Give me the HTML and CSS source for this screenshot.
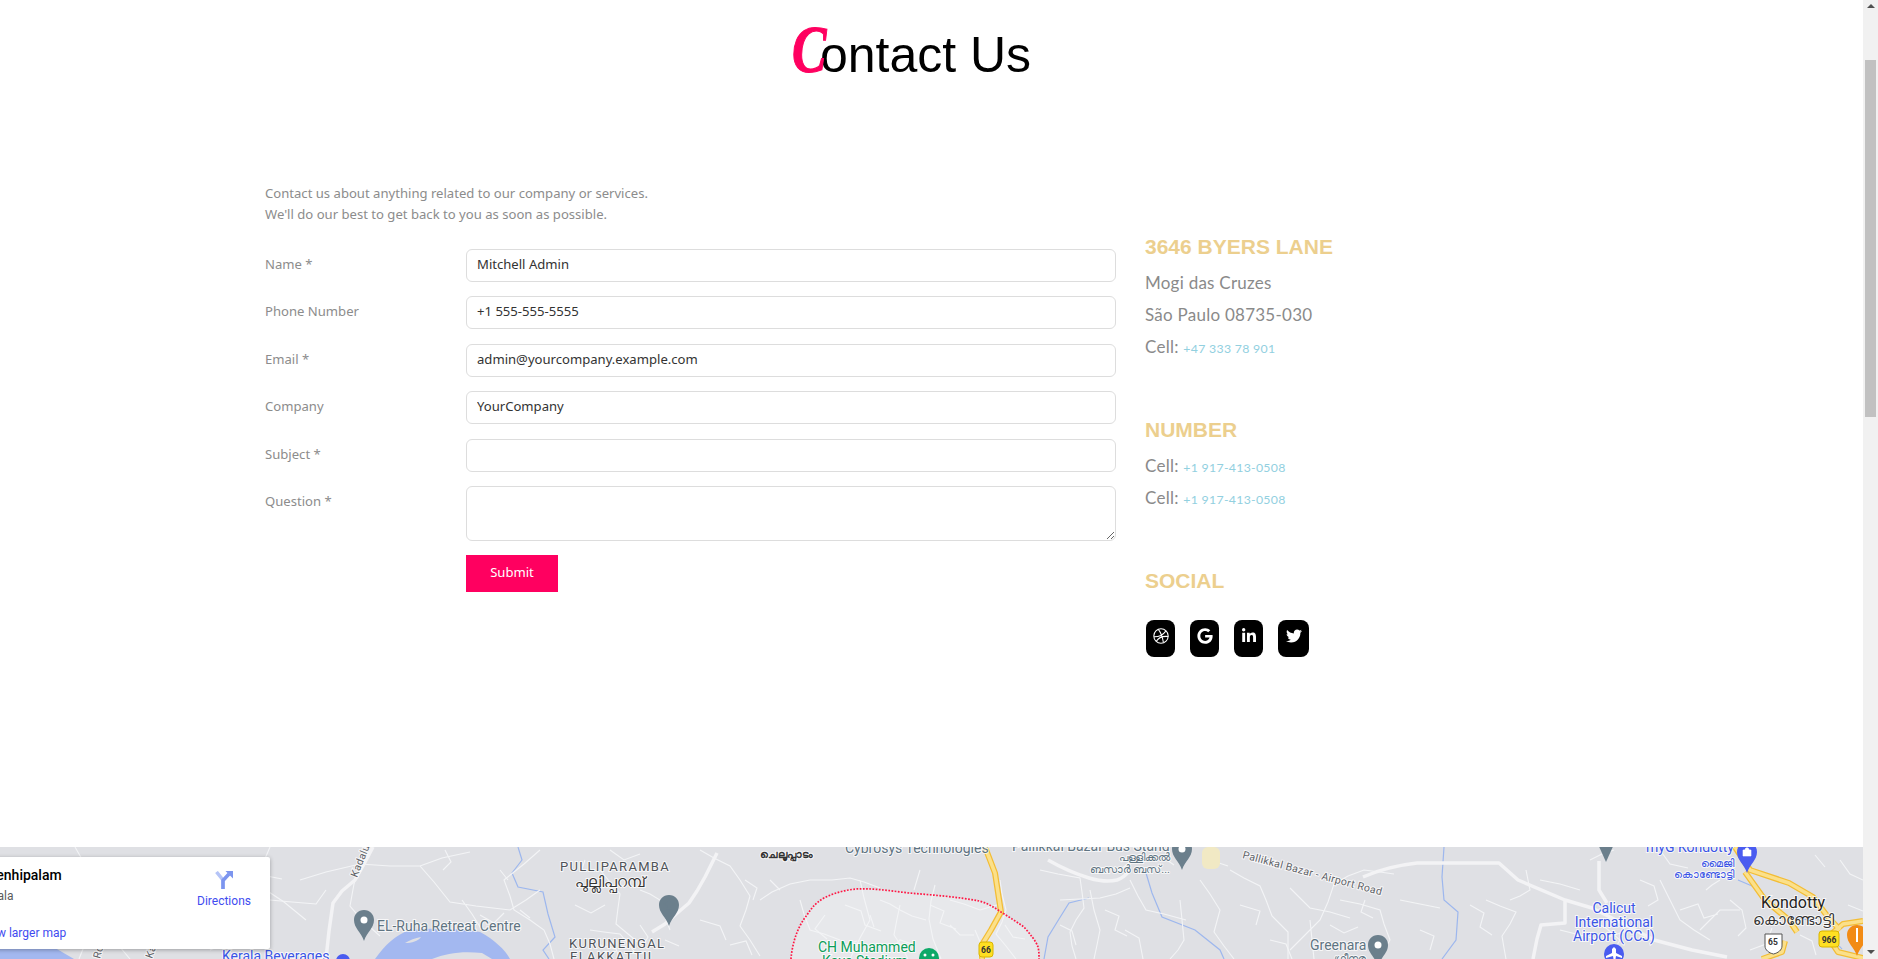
FILE: index.html
```html
<!DOCTYPE html>
<html lang="en">
<head>
<meta charset="utf-8">
<title>Contact Us</title>
<link rel="stylesheet" href="styles.css">
</head>
<body>
<div class="viewport">
  <div class="page">
    <h1 class="title"><span class="title-c">C</span>ontact Us</h1>
    <main class="contact">
      <section class="form-col">
        <p class="intro">Contact us about anything related to our company or services.<br>We'll do our best to get back to you as soon as possible.</p>
        <form class="form">
          <div class="row"><label class="lbl">Name *</label><input class="field" value="Mitchell Admin"></div>
          <div class="row"><label class="lbl">Phone Number</label><input class="field" value="+1 555-555-5555"></div>
          <div class="row"><label class="lbl">Email *</label><input class="field" value="admin@yourcompany.example.com"></div>
          <div class="row"><label class="lbl">Company</label><input class="field" value="YourCompany"></div>
          <div class="row"><label class="lbl">Subject *</label><input class="field"></div>
          <div class="row"><label class="lbl">Question *</label><textarea class="field area"></textarea></div>
          <div class="row"><span class="lbl"></span><button class="submit" type="button">Submit</button></div>
        </form>
      </section>
      <aside class="info">
        <h3 class="info-h">3646 BYERS LANE</h3>
        <p class="info-l">Mogi das Cruzes</p>
        <p class="info-l">São Paulo 08735-030</p>
        <p class="info-l">Cell: <a class="tel">+47 333 78 901</a></p>
        <h3 class="info-h gap">NUMBER</h3>
        <p class="info-l">Cell: <a class="tel">+1 917-413-0508</a></p>
        <p class="info-l">Cell: <a class="tel">+1 917-413-0508</a></p>
        <h3 class="info-h gap2">SOCIAL</h3>
        <div class="social">
          <a class="soc"><svg class="ico" viewBox="0 0 24 24" fill="none" stroke="#fff" stroke-width="1.6"><circle cx="12" cy="12" r="10.8"/><path d="M8 2c3.500 4.400 6 10.400 7.600 19.500M1.500 13.200c6.500.2 12.600-1.600 17.700-8.600M5 20c2.800-5 8-8.300 18-7.300"/></svg></a>
          <a class="soc"><svg class="ico" viewBox="0 0 488 512" fill="#fff"><path d="M488 261.800C488 403.300 391.100 504 248 504 110.800 504 0 393.200 0 256S110.800 8 248 8c66.800 0 123 24.500 166.300 64.900l-67.500 64.900C258.500 52.600 94.300 116.600 94.300 256c0 86.500 69.100 156.800 153.700 156.800 98.200 0 135-70.400 140.800-106.900H248v-85.300h236.100c2.300 12.700 3.900 24.900 3.900 41.200z"/></svg></a>
          <a class="soc"><svg class="ico" viewBox="0 0 448 512" fill="#fff"><path d="M100.280 448H7.400V148.900h92.880zM53.790 108.100C24.090 108.100 0 83.500 0 53.800a53.790 53.790 0 0 1 107.580 0c0 29.700-24.100 54.300-53.790 54.300zM447.900 448h-92.680V302.400c0-34.700-.7-79.200-48.290-79.200-48.290 0-55.690 37.700-55.690 76.700V448h-92.780V148.900h89.080v40.800h1.300c12.400-23.500 42.690-48.300 87.880-48.300 94 0 111.280 61.900 111.280 142.300V448z"/></svg></a>
          <a class="soc wide"><svg class="ico" viewBox="0 0 512 512" fill="#fff"><path d="M459.370 151.716c.325 4.548.325 9.097.325 13.645 0 138.720-105.583 298.558-298.558 298.558-59.452 0-114.680-17.219-161.137-47.106 8.447.974 16.568 1.299 25.340 1.299 49.055 0 94.213-16.568 130.274-44.832-46.132-.975-84.792-31.188-98.112-72.772 6.498.974 12.995 1.624 19.818 1.624 9.421 0 18.843-1.300 27.614-3.573-48.081-9.747-84.143-51.980-84.143-102.985v-1.299c13.969 7.797 30.214 12.670 47.431 13.319-28.264-18.843-46.781-51.005-46.781-87.391 0-19.492 5.197-37.360 14.294-52.954 51.655 63.675 129.300 105.258 216.365 109.807-1.624-7.797-2.599-15.918-2.599-24.040 0-57.828 46.782-104.934 104.934-104.934 30.213 0 57.502 12.670 76.670 33.137 23.715-4.548 46.456-13.320 66.599-25.340-7.798 24.366-24.366 44.833-46.132 57.827 21.117-2.273 41.584-8.122 60.426-16.243-14.292 20.791-32.161 39.308-52.628 54.253z"/></svg></a>
        </div>
      </aside>
    </main>
    <section class="map">
      <svg class="map-svg" viewBox="0 847 1863 112" preserveAspectRatio="none">
        <g class="water">
          <path d="M0 945h50l24 14H0z"/>
          <path d="M375 959c10-14 20-24 35-29 20-2 50-2 70 2 15 8 25 18 30 27z"/>
        </g>
        <path class="bank" d="M432 959c15-6 30-8 50-6l10 6z"/>
        <path class="bank" d="M405 943c5-3 10-5 16-6-3 4-9 6-16 6z"/>
        <g class="river">
          <path d="M518 847l4 13-10 13 6 14 25 5 5 22 7 23-12 13 6 9"/>
          <path d="M1089 898l-20 5-10 16-11 18-4 22"/>
          <path d="M1146 873l6 20 10 24 33 13 25 20 4 9"/>
          <path d="M1444 847l-2 30 2 23 14 12-2 28-14 19"/>
          <path d="M1738 880l14 6 8 4M1790 915c10 6 20 2 28 10M1820 935c8 6 16 6 22 14"/>
        </g>
        <path class="zone" d="M791 959c1-14 6-32 16-44 5-8 10-13 17-17 10-5 21-8 32-9 18-1 35 2 53 4 24 2 50 4 70 8 8 2 15 6 22 11 8 5 16 10 23 15 6 7 12 14 14 20 1 4 1 8 1 12z"/>
        <g class="road-thin">
          <path d="M75 847l8 14 4 12 6 14-2 16 2 18-6 18-8 20M20 870l14-2 16 4 20-4M30 910l16-3 18 2 28 15M110 860l18 8 22 3 20 5 24-6 36-4M130 900l22-4 18 2 20-6 14 8 16 4M236 870l12 6 18 14 18 12 22 18"/>
          <path d="M270 847l-6 14-2 14 20 4M270 900l22 2 24 2 10-14M300 880l26-8 34-8 30 2 30 0 22-8 28-6M360 866l-6 18-4 22 12 14 18 16M420 866l14 16 16 20 26 4 34 4 16-10 14-10M462 900l10 14 10 16M540 850l-16 14-20 16 6 16 4 14 16 10 14 10 6 14 4 15"/>
          <path d="M600 870l10 12 10 12-2 14-2 16 12 10 12 10M640 890l10 4 10 6 4 14 6 16M590 930l14 2 16 2 10 12 10 13M575 905l16 8 14-8M610 850l14 10 16-6M585 860l-4 12"/>
          <path d="M700 850l14 8 16 8 10 14 10 16-4 14-6 16 10 14 10 16M760 900l12-8 18-8 20-4 22 0 18-2 14 4 16 6M800 900l4 14 6 16 14 4 16 6M860 880l4 18 6 22-10 18-10 21M880 900l10 4 10 6 12 6 14 4"/>
          <path d="M900 905l-3 14-3 16 8 12 6 12M920 870l-3 10-3 10M935 885l-4 16-2 18 4 20 8 20M950 900l14 4 16 6 20-6M1000 880l2 14 4 16-4 12-6 12 10 12 10 13M1040 870l18 4 22 4 2 14 2 16-8 12-6 12 2 14 4 13"/>
          <path d="M1060 900l20-1 20-1 16-4 14-6M1090 890l4 20 6 20-3 15-3 14M1120 870l10-8 10-8M1130 880l8 16 8 14 18 4 22 6M1180 900l2 20 2 20-6 10-8 9M1200 880l10 14 10 16-3 11-3 11 10 14 10 13"/>
          <path d="M1230 870l14 8 16 8 6 14 6 16 8 8 8 8 0 14 0 13M1290 888l10 10 10 10 20 4 20 6M1310 920l2 20 2 19M1290 950l14-14 16-16 8-18 6-18 14-8 16-6 16 2 14 2M1340 900l20 4 20 6 4 14 6 16-6 10-4 9M1400 900l20 4 20 4"/>
          <path d="M1486 900l14 6 16 6-6 12-8 12 2 12 2 11M1510 900l10-4 10-6-2-10-2-10M1540 880l20 4 20 6M1590 920l16 8 14 12-6 10-4 9M1660 880l10 20 10 20 14 10 16 10M1700 930l10-10 10-10 10 0 10 0M1590 860l12-6 12-4M1720 880l-8 5-6 5M1560 930l20 5 20 5 14-5 16-5M1640 880l14 6 4 14-10 6M1660 850l10 14 18 4M1680 910l18-6 6 14 14-4M1730 900l12 10 4 18-8 8M1750 950l16-6 6-16M1800 935l12 6 4 14M1840 860l10 14 13 6M1815 855l10 12M1848 905l15 6"/>
          <path d="M210 950l14-6 12 15M230 905l14 4 8 14M140 935l12-12 14 6M120 947l10 12M180 920l8 14M445 850l6 12-8 8M500 870l8 10M480 915l14 8 10-10M520 910l10 8M600 945l16 4 4 10M640 925l8 12-6 10M665 940l14 6M745 880l12 8-4 12M700 920l20 6 6 14M730 945l16-4 6 14M770 880l10 10M845 905l16 6 4 14 16 6M825 915l-10 14 12 10M845 945l12-4M870 915l4 12M890 950l10-10 12 4M930 905l14 6-4 12 16 6M950 925l10 10 14 0M1005 925l8 12 12 2M975 930l6 14M1060 925l12 6 4 14M1105 910l14 6-4 14 12 6M1125 930l14 8 4 21M1160 855l14 10M1210 860l18 6M1240 905l20 6-4 14M1270 940l16 4 6 15M1330 925l14 8 14-6M1365 900l-4 12 12 6M1420 930l14 6-4 14M1470 905l14 8-4 14 12 8"/>
        </g>
        <g class="road">
          <path d="M326 959l3-28 4-28 9-12 13-11 9-16 9-17"/>
          <path d="M717 853l-12 24-8 14-8 12-14 12-10 9-13 8"/>
          <path d="M1048 860c14 8 28 14 41 18 10 3 20 4 28 2 6-2 10-6 13-10"/>
          <path d="M1363 877c18-8 36-12 54-14h82l19 17 47 20 27 8 32 16 30 16 38 10 35 7"/>
          <path d="M1599 861v29l8 13M1533 959l4-20 4-14 24-2v-23"/>
        </g>
        <g class="hwy">
          <path d="M985 847l10 26 6 39-10 18-8 13-1 16"/>
          <path d="M1735 847l15 23 39 13 24 14 15 20 12 13"/>
          <path d="M1745 872l20 28 24 20 8 12"/>
          <path d="M1863 921l-20 3-15 13 10 15 25 6"/>
          <path d="M1785 941l-3 11-20 7"/>
        </g>
        <g class="hwy-in">
          <path d="M985 847l10 26 6 39-10 18-8 13-1 16"/>
          <path d="M1735 847l15 23 39 13 24 14 15 20 12 13"/>
          <path d="M1745 872l20 28 24 20 8 12"/>
          <path d="M1863 921l-20 3-15 13 10 15 25 6"/>
          <path d="M1785 941l-3 11-20 7"/>
        </g>
        <path class="dots" d="M791 959c1-14 6-32 16-44 5-8 10-13 17-17 10-5 21-8 32-9 18-1 35 2 53 4 24 2 50 4 70 8 8 2 15 6 22 11 8 5 16 10 23 15 6 7 12 14 14 20 1 4 1 8 1 12"/>
        <rect class="pale" x="1202" y="847" width="18" height="22" rx="6"/>
        <g class="pin">
          <g transform="translate(364 926)"><path d="M0-16c6 0 10 4.500 10 10 0 8-7 12-10 21-3-9-10-13-10-21 0-5.500 4-10 10-10z"/><circle cy="-6" r="3.500" fill="#fff"/></g>
          <g transform="translate(669 911)"><path d="M0-16c6 0 10 4.500 10 10 0 8-7 12-10 21-3-9-10-13-10-21 0-5.500 4-10 10-10z"/><path d="M-6-7l6-2.500 6 2.500-6 2.500zM-3-4v2.500h6v-2.500l-3 1z" fill="#fff"/></g>
          <g transform="translate(1182 855)"><path d="M0-16c6 0 10 4.500 10 10 0 8-7 12-10 21-3-9-10-13-10-21 0-5.500 4-10 10-10z"/><circle cy="-6" r="3.500" fill="#fff"/></g>
          <g transform="translate(1378 951)"><path d="M0-16c6 0 10 4.500 10 10 0 8-7 12-10 21-3-9-10-13-10-21 0-5.500 4-10 10-10z"/><circle cy="-6" r="3.500" fill="#fff"/></g>
          <g transform="translate(1606 851)"><path d="M-9-9h18l-9 20z"/></g>
        </g>
        <g transform="translate(1747 858)"><path class="pin-blue" d="M0-16c6 0 10 4.500 10 10 0 8-7 12-10 21-3-9-10-13-10-21 0-5.500 4-10 10-10z"/><path d="M-4-8h8v6h-8zM-2-8c0-3 4-3 4 0" fill="#fff" stroke="#fff" stroke-width=".6"/></g>
        <g transform="translate(1863 941)"><path class="pin-orange" d="M-6-16c6 0 10 4.500 10 10 0 8-7 12-10 21-3-9-10-13-10-21 0-5.500 4-10 10-10z"/><path d="M-7-13h2v14h-2z" fill="#fff"/></g>
        <circle class="pin-blue" cx="1614" cy="954" r="10"/>
        <path d="M1606 956l6-3v-4l2-2 2 2v4l6 3v2l-6-2-.5 3 2 2v1l-3-1-3 1v-1l2-2-.5-3-7 2z" fill="#fff"/>
        <circle class="pin-green" cx="929" cy="958" r="10"/>
        <circle cx="925" cy="955" r="1.500" fill="#fff"/><circle cx="933" cy="955" r="1.500" fill="#fff"/>
        <circle class="pin-blue" cx="343" cy="961" r="7"/>
        <rect class="rshield" x="979" y="942" width="14" height="15" rx="3"/>
        <rect class="rshield" x="1819" y="931" width="20" height="16" rx="3"/>
        <path class="wshield" d="M1765 934h17v12c0 4-4 7-8.500 8-4.500-1-8.500-4-8.500-8z"/>
        <text class="lb-s" x="986" y="953" text-anchor="middle">66</text>
        <text class="lb-s" x="1829" y="943" text-anchor="middle">966</text>
        <text class="lb-s" x="1773" y="945" text-anchor="middle">65</text>
        <text class="lb-road" transform="translate(357 878) rotate(-68)">Kadalum</text>
        <text class="lb-road" transform="translate(1242 858) rotate(15)">Pallikkal Bazar - Airport Road</text>
        <text class="lb-road" transform="translate(152 959) rotate(-70)">Kadalundi</text>
        <text class="lb-road" transform="translate(100 959) rotate(-75)">Road</text>
        <text class="lb-grey" x="377" y="931">EL-Ruha Retreat Centre</text>
        <text class="lb-area" x="560" y="871">PULLIPARAMBA</text>
        <text class="lb-ml" x="575" y="887">പുല്ലിപ്പറമ്പ്</text>
        <text class="lb-area" x="569" y="948">KURUNENGAL</text>
        <text class="lb-area" x="570" y="961">ELAKKATTIL</text>
        <text class="lb-grey" x="845" y="853">Cybrosys Technologies</text>
        <text class="lb-ml-s" x="760" y="858">ചെലൂപ്പാടം</text>
        <text class="lb-grey" x="1012" y="851">Pallikkal Bazar Bus Stand</text>
        <text class="lb-ml-g" x="1170" y="861" text-anchor="end">പള്ളിക്കൽ</text>
        <text class="lb-ml-g" x="1170" y="873" text-anchor="end">ബസാർ ബസ്...</text>
        <text class="lb-grey" x="1310" y="950">Greenara</text>
        <text class="lb-ml-g" x="1334" y="962">ഗ്രീനര</text>
        <text class="lb-green" x="818" y="952">CH Muhammed</text>
        <text class="lb-green" x="822" y="966">Koya Stadium</text>
        <text class="lb-blue" x="222" y="961">Kerala Beverages</text>
        <text class="lb-blue" x="1646" y="852">myG Kondotty</text>
        <text class="lb-ml-b" x="1734" y="867" text-anchor="end">മൈജി</text>
        <text class="lb-ml-b" x="1734" y="878" text-anchor="end">കൊണ്ടോട്ടി</text>
        <text class="lb-blue" x="1614" y="913" text-anchor="middle">Calicut</text>
        <text class="lb-blue" x="1614" y="927" text-anchor="middle">International</text>
        <text class="lb-blue" x="1614" y="941" text-anchor="middle">Airport (CCJ)</text>
        <text class="lb-town" x="1793" y="908" text-anchor="middle">Kondotty</text>
        <text class="lb-ml" x="1793" y="925" text-anchor="middle">കൊണ്ടോട്ടി</text>
      </svg>
      <div class="card">
        <div class="card-main">
          <div class="card-name">Thenhipalam</div>
          <div class="card-sub">Kerala</div>
          <a class="card-link">View larger map</a>
        </div>
        <a class="dir">
          <svg class="dir-ico" viewBox="0 0 18 18"><path class="dir-a" d="M1.500 1l6.500 8v9"/><path class="dir-b" d="M8 18V9.500l6-6.500"/><path class="dir-c" d="M10.500 0H18v7.500z"/></svg>
          <span>Directions</span>
        </a>
      </div>
    </section>
  </div>
  <div class="scrollbar">
    <span class="arrow up"></span>
    <div class="track"><div class="thumb"></div></div>
    <span class="arrow down"></span>
  </div>
</div>
</body>
</html>
```
FILE: styles.css
```css
* { box-sizing: border-box; }
html, body { margin: 0; height: 100%; overflow: hidden; background: #fff; }
body { font-family: "Noto Sans", sans-serif; color: #8c8c8c; }
.viewport { display: flex; height: 959px; }
.page { flex: 1; min-width: 0; display: flex; flex-direction: column; overflow: hidden; }

.title { margin: 0; height: 158px; padding: 20px 40px 0 0; text-align: center; font: 400 50px/70px "Liberation Sans", sans-serif; color: #000; }
.title-c { display: inline-block; width: 28px; font: italic 700 68px/56px "Liberation Serif", serif; color: #ff0060; -webkit-text-stroke: 1.200px #ff0060; transform: scaleX(.76); transform-origin: left bottom; }

.contact { display: flex; padding-left: 265px; height: 689px; }
.form-col { width: 851px; padding-top: 24.500px; }
.intro { margin: 0 0 24px; font-size: 13.100px; line-height: 21px; color: #8c8c8c; }
.form { display: flex; flex-direction: column; gap: 14.500px; }
.row { display: flex; align-items: flex-start; }
.lbl { width: 201px; font-size: 13.100px; line-height: 30px; color: #8c8c8c; }
.field { width: 650px; height: 33px; padding: 0 10px 3px; border: 1.500px solid #ddd; border-radius: 6px; background: #fff; font: 13.100px "Noto Sans", sans-serif; color: #333; outline: none; display: block; }
.area { height: 54.500px; resize: vertical; margin: 0; }
.submit { width: 92px; height: 37px; border: 0; background: #ff0060; color: #fff; font: 13.100px "Noto Sans", sans-serif; padding: 0 0 3px; }

.info { margin-left: 29px; padding-top: 74px; display: flex; flex-direction: column; align-items: flex-start; }
.info-h { margin: 0 0 5px; font: 700 21px/30px "Liberation Sans", sans-serif; color: #eccf8e; }
.info-h.gap { margin-top: 52px; }
.info-h.gap2 { margin-top: 52px; margin-bottom: 24px; }
.info-l { margin: 0; font: 400 17px/32px "Lato", sans-serif; color: #8a8a8a; letter-spacing: .25px; }
.tel { font-size: 12.300px; line-height: 1; color: #92d0df; letter-spacing: .3px; }
.social { display: flex; gap: 15px; margin-left: 1px; }
.soc { width: 29px; height: 37px; border-radius: 8px; background: #000; display: flex; justify-content: center; align-items: flex-start; padding-top: 8px; }
.soc.wide { width: 31px; }
.ico { height: 16px; width: 18px; display: block; }

.map { position: relative; flex: 1; background: #dfe0e4; overflow: hidden; }
.map-svg { display: block; width: 100%; height: 112px; }
.water path { fill: #a3b8f0; }
.bank { fill: #dfe0e4; }
.zone { fill: #e7e8eb; }
.pale { fill: #f1e9c4; }
.river path { fill: none; stroke: #9db7ee; stroke-width: 1.200; }
.road-thin path { fill: none; stroke: #f3f4f6; stroke-width: 1.100; }
.road path { fill: none; stroke: #f3f3f5; stroke-width: 3.500; stroke-linejoin: round; }
.hwy path { fill: none; stroke: #f3bd35; stroke-width: 6; stroke-linejoin: round; }
.hwy-in path { fill: none; stroke: #fbe08a; stroke-width: 3.500; stroke-linejoin: round; }
.dots { fill: none; stroke: #ff1744; stroke-width: 1.700; stroke-dasharray: 1.700 1.500; }
.pin path { fill: #6b7f8c; }
.pin-blue { fill: #4a5cf0; }
.pin-orange { fill: #f28b14; }
.pin-green { fill: #0ea968; }
.rshield { fill: #ffdf22; stroke: #d9b400; }
.wshield { fill: #fff; stroke: #555; }
.map-svg text { font-family: Roboto, "Noto Sans", sans-serif; paint-order: stroke; stroke: rgba(255,255,255,.75); stroke-width: 2px; }
.map-svg .lb-s { font-size: 8.500px; font-weight: 700; fill: #333; stroke: none; }
.map-svg .lb-road { font-size: 10.500px; letter-spacing: .3px; fill: #5f6368; }
.map-svg .lb-grey { font-size: 14px; fill: #5f7482; }
.map-svg .lb-area { font-size: 13px; letter-spacing: 1.300px; fill: #4f5358; }
.map-svg .lb-ml { font-size: 15px; font-weight: 500; fill: #333; }
.map-svg .lb-ml-s { font-size: 10.500px; font-weight: 700; fill: #333; }
.map-svg .lb-ml-g { font-size: 11px; fill: #5f7482; }
.map-svg .lb-ml-b { font-size: 11px; fill: #3b55e6; }
.map-svg .lb-green { font-size: 14px; fill: #0b9d58; }
.map-svg .lb-blue { font-size: 14px; fill: #3b55e6; }
.map-svg .lb-town { font-size: 16px; fill: #222; }

.card { position: absolute; left: -30px; top: 10px; width: 300px; height: 92px; background: #fff; border-radius: 2px; box-shadow: 0 1px 4px rgba(0,0,0,.3); display: flex; justify-content: space-between; font-family: Roboto, sans-serif; }
.card-main { padding: 8px 0 0 10px; }
.card-name { font-size: 14px; font-weight: 500; line-height: 20px; color: #000; }
.card-sub { font-size: 12px; line-height: 16px; margin-top: 3px; color: #5b5b5b; }
.card-link { display: block; margin-top: 21px; font-size: 12px; line-height: 16px; color: #3f4cf0; }
.dir { width: 88px; padding-top: 14px; margin-right: 2px; display: flex; flex-direction: column; align-items: center; font-size: 12px; color: #3f4cf0; }
.dir-ico { width: 18px; height: 18px; }
.dir-a { fill: none; stroke: #b5c4f7; stroke-width: 3.500; }
.dir-b { fill: none; stroke: #7c95ef; stroke-width: 3.500; }
.dir-c { fill: #7c95ef; }
.dir span { margin-top: 5px; }

.scrollbar { width: 15px; flex: none; background: #f1f1f1; display: flex; flex-direction: column; align-items: center; }
.arrow { flex: none; width: 0; height: 0; border-left: 4px solid transparent; border-right: 4px solid transparent; margin: 4px 0 5px; }
.arrow.up { border-bottom: 4px solid #505050; }
.arrow.down { border-top: 4px solid #505050; }
.track { flex: 1; width: 100%; padding: 47px 2px 0; }
.thumb { height: 357px; background: #c1c1c1; }
```
